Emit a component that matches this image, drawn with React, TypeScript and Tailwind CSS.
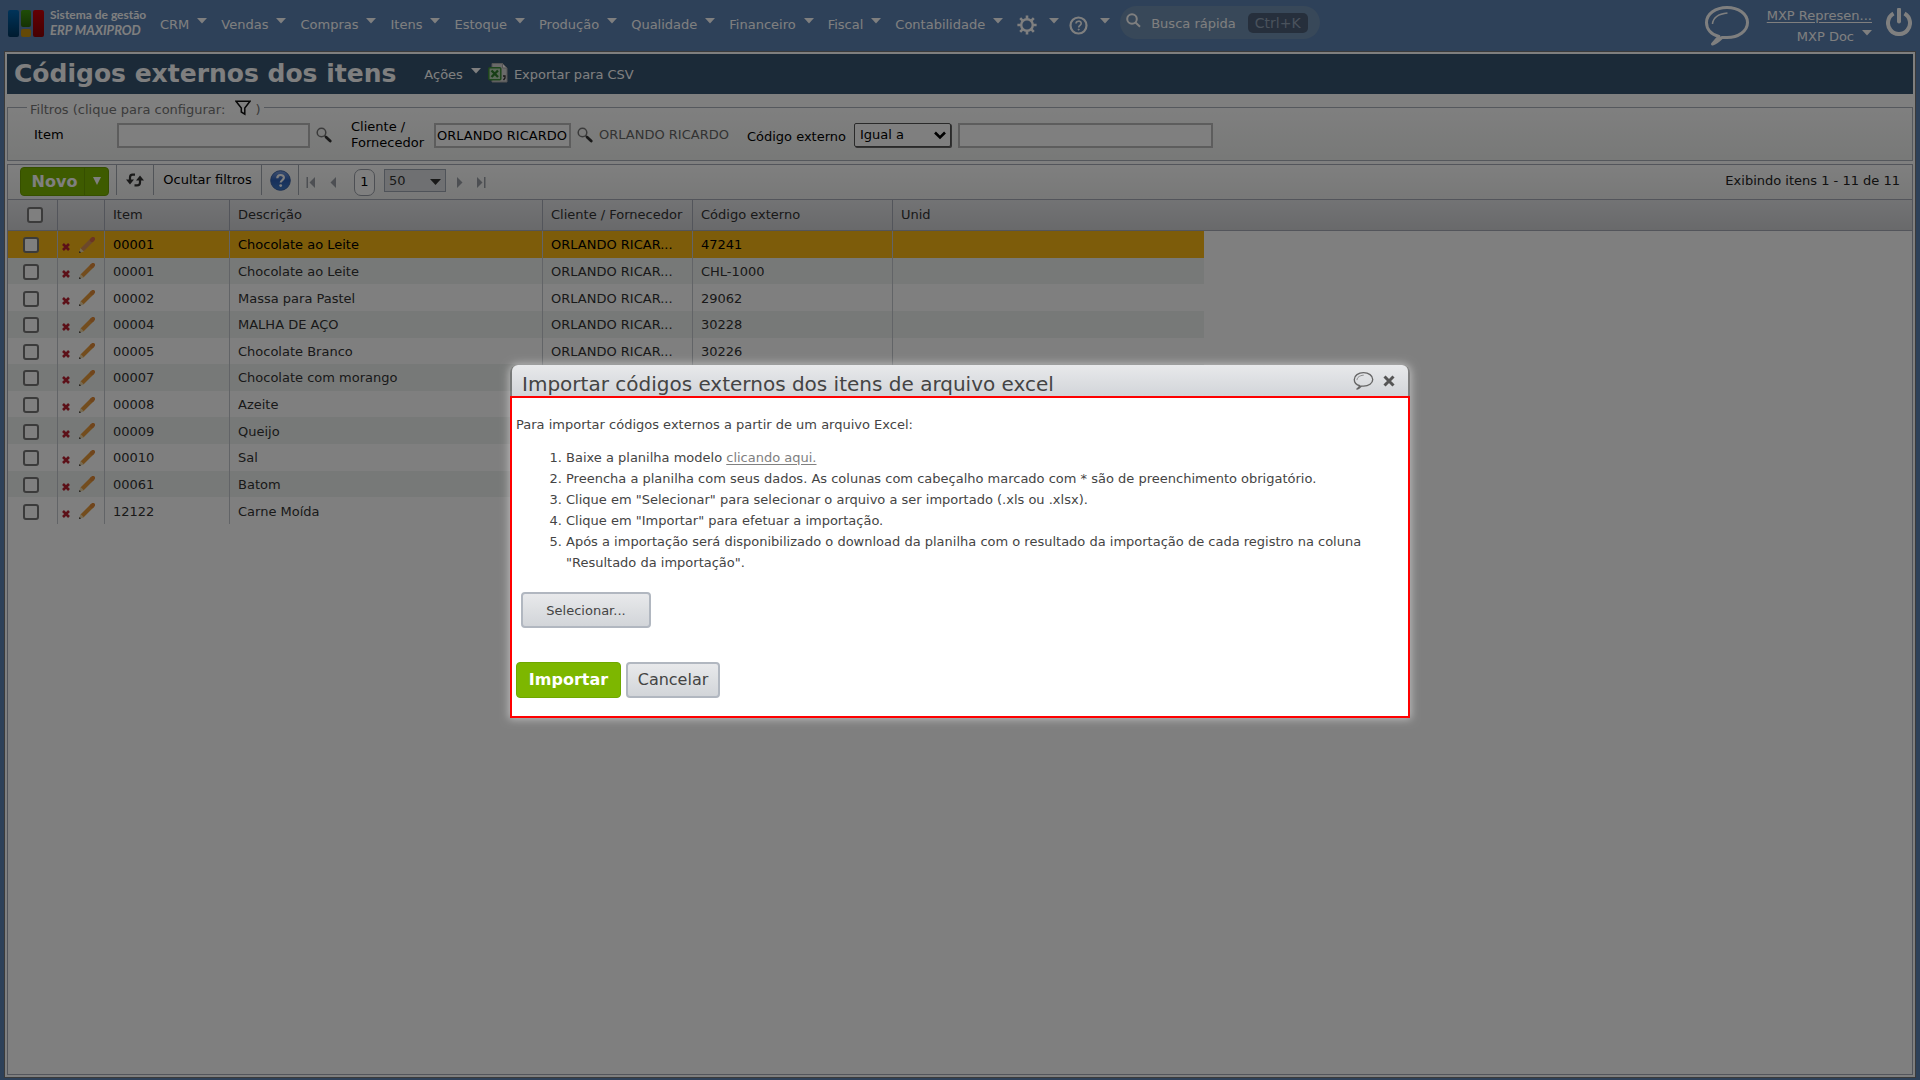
import { useState } from "react";

/* ─── Data ────────────────────────────────────────────────────────── */

const MENU = [
  "CRM",
  "Vendas",
  "Compras",
  "Itens",
  "Estoque",
  "Produção",
  "Qualidade",
  "Financeiro",
  "Fiscal",
  "Contabilidade",
];

const CUSTOMER = "ORLANDO RICARDO";
const CUSTOMER_SHORT = "ORLANDO RICAR...";

interface Row {
  item: string;
  desc: string;
  customer?: string;
  code?: string;
}

const ROWS: Row[] = [
  { item: "00001", desc: "Chocolate ao Leite", customer: CUSTOMER_SHORT, code: "47241" },
  { item: "00001", desc: "Chocolate ao Leite", customer: CUSTOMER_SHORT, code: "CHL-1000" },
  { item: "00002", desc: "Massa para Pastel", customer: CUSTOMER_SHORT, code: "29062" },
  { item: "00004", desc: "MALHA DE AÇO", customer: CUSTOMER_SHORT, code: "30228" },
  { item: "00005", desc: "Chocolate Branco", customer: CUSTOMER_SHORT, code: "30226" },
  { item: "00007", desc: "Chocolate com morango" },
  { item: "00008", desc: "Azeite" },
  { item: "00009", desc: "Queijo" },
  { item: "00010", desc: "Sal" },
  { item: "00061", desc: "Batom" },
  { item: "12122", desc: "Carne Moída" },
];

/* ─── Icons ───────────────────────────────────────────────────────── */

function Caret() {
  return (
    <svg width="10" height="6" viewBox="0 0 10 6" aria-hidden="true" className="mb-2 shrink-0">
      <path d="M0 0h10L5 5.5z" fill="#fff" />
    </svg>
  );
}

function Logo() {
  return (
    <svg width="36" height="28" viewBox="0 0 36 28" aria-hidden="true">
      <defs>
        <linearGradient id="blue" x1="0" y1="0" x2="0" y2="1">
          <stop offset="0" stopColor="#0068b4" />
          <stop offset="1" stopColor="#00365f" />
        </linearGradient>
        <linearGradient id="green" x1="0" y1="0" x2="0" y2="1">
          <stop offset="0" stopColor="#3f9a10" />
          <stop offset="1" stopColor="#2a640a" />
        </linearGradient>
        <linearGradient id="red" x1="0" y1="0" x2="0" y2="1">
          <stop offset="0" stopColor="#c80008" />
          <stop offset="1" stopColor="#8a0004" />
        </linearGradient>
      </defs>
      <rect width="11" height="27" rx="2" fill="url(#blue)" />
      <rect x="13" width="10" height="17" rx="2" fill="url(#green)" />
      <rect x="13" y="19" width="10" height="8" rx="2" fill="#c8920e" />
      <rect x="25" width="11" height="27" rx="2" fill="url(#red)" />
    </svg>
  );
}

function Gear() {
  return (
    <svg width="20" height="20" viewBox="0 0 20 20" fill="none" stroke="#fff" aria-hidden="true">
      <circle cx="10" cy="10" r="5.8" strokeWidth="2.4" />
      <path
        d="M10 .4v3.4M10 16.2v3.4M.4 10h3.4M16.2 10h3.4M3.2 3.2l2.4 2.4M14.4 14.4l2.4 2.4M3.2 16.8l2.4-2.4M14.4 5.6l2.4-2.4"
        strokeWidth="2.6"
      />
    </svg>
  );
}

function HelpRing() {
  return (
    <svg width="19" height="19" viewBox="0 0 19 19" fill="none" stroke="#fff" aria-hidden="true">
      <circle cx="9.5" cy="9.5" r="8" strokeWidth="2.2" />
      <path d="M7 7.6c0-3.2 5.2-3.2 5.2-.2 0 1.8-2.5 2-2.5 4" strokeWidth="1.6" />
      <circle cx="9.7" cy="13.6" r=".6" fill="#fff" strokeWidth=".8" />
    </svg>
  );
}

function SearchThin() {
  return (
    <svg width="15" height="15" viewBox="0 0 15 15" fill="none" stroke="#fff" strokeWidth="2" aria-hidden="true" className="mb-1">
      <circle cx="6" cy="6" r="4.8" />
      <path d="M9.5 9.5l4.5 4.2" />
    </svg>
  );
}

function Magnifier() {
  return (
    <svg width="16" height="16" viewBox="0 0 16 16" fill="none" aria-hidden="true">
      <circle cx="5.5" cy="5.5" r="4.3" stroke="#777" strokeWidth="1.5" />
      <path d="M8.8 8.8l1.8 1.6" stroke="#555" strokeWidth="1.6" />
      <path d="M10.2 10.2l4 3.8" stroke="#333" strokeWidth="2.8" strokeLinecap="round" />
    </svg>
  );
}

function Bubble({ className, color, width }: { className: string; color: string; width: number }) {
  return (
    <svg className={className} viewBox="0 0 44 40" fill="none" stroke={color} strokeWidth={width} aria-hidden="true">
      <path d="M14 30.5C6 28.5 1.5 23 1.5 16.5 1.5 8 10.5 1.5 22 1.5S42.5 8 42.5 16.5 33.5 31.5 22 31.5c-2 0-4-.2-5 0-3 3-6 5.5-9.5 6.500 2-2 4-4.500 6.500-7.500z" strokeLinejoin="round" />
      <path d="M7.500 18c.5-6 5-10 15-11" strokeWidth={width / 2} />
    </svg>
  );
}

function Power() {
  return (
    <svg width="26" height="28" viewBox="0 0 26 28" fill="none" stroke="#fff" strokeWidth="4" aria-hidden="true">
      <path d="M7.500 5.500a11 11 0 1 0 11 0" />
      <path d="M13 1.500v12" strokeLinecap="round" />
    </svg>
  );
}

function CsvFile() {
  return (
    <svg width="20" height="20" viewBox="0 0 20 20" aria-hidden="true" className="mb-1">
      <path d="M4 .5h10.500L19 5v14H4z" fill="#d4d4d4" stroke="#aaa" />
      <path d="M14.500.5V5H19z" fill="#fff" stroke="#aaa" />
      <rect x=".8" y="4.800" width="12" height="12" rx="1" fill="#b9d3b4" stroke="#3d8d38" strokeWidth="1.500" />
      <path d="M3.500 7.500l6.500 6.500M10 7.500L3.500 14" stroke="#2f7d2a" strokeWidth="2.400" />
      <path d="M15 13h2v2l-1.500 2" stroke="#333" strokeWidth="1.300" fill="none" />
    </svg>
  );
}

function Funnel() {
  return (
    <svg width="16" height="16" viewBox="0 0 16 16" fill="none" stroke="#111" strokeWidth="1.500" aria-hidden="true">
      <path d="M1 1.200h14L9.800 8v6.200L6.300 12V8z" />
    </svg>
  );
}

function Refresh() {
  return (
    <svg width="18" height="14" viewBox="0 0 18 14" aria-hidden="true">
      <g fill="none" stroke="#333" strokeWidth="2.200">
        <path d="M9 1.600H6.500Q4 1.600 4 4.500V8" />
        <path d="M8.500 12.400h2.500q3 0 3-3V6" />
      </g>
      <path d="M0 6.500h8L4 11.500zM10 7.500h8L14 2.500z" fill="#333" />
    </svg>
  );
}

function HelpBall() {
  return (
    <svg width="21" height="21" viewBox="0 0 21 21" aria-hidden="true">
      <defs>
        <linearGradient id="ball" x1="0" y1="0" x2="0" y2="1">
          <stop offset="0" stopColor="#7d9fe0" />
          <stop offset=".5" stopColor="#2f62b8" />
          <stop offset="1" stopColor="#3f7ac8" />
        </linearGradient>
      </defs>
      <circle cx="10.500" cy="10.500" r="9.800" fill="url(#ball)" stroke="#3a62a4" strokeWidth="1" />
      <path d="M7.300 8.200c0-4.200 6.600-4.200 6.600-.4 0 2.300-3.200 2.200-3.200 4.800" fill="none" stroke="#fff" strokeWidth="2.200" />
      <circle cx="10.700" cy="15.600" r="1.400" fill="#fff" />
    </svg>
  );
}

function PageArrow({ back, bar }: { back?: boolean; bar?: boolean }) {
  return (
    <svg width="9" height="11" viewBox="0 0 9 11" aria-hidden="true" className={back ? "rotate-180" : ""}>
      <path d={bar ? "M0 0v11l5.500-5.500z" : "M2 0v11l5.500-5.500z"} fill="#9a9fa6" />
      {bar && <path d="M7 0h1.500v11H7z" fill="#9a9fa6" />}
    </svg>
  );
}

function DeleteMark() {
  return (
    <svg width="8" height="8" viewBox="0 0 8 8" aria-hidden="true">
      <path d="M1 1l6 6M7 1L1 7" stroke="#b82030" strokeWidth="2.600" />
    </svg>
  );
}

function Pencil({ faded }: { faded: boolean }) {
  return (
    <svg width="17" height="17" viewBox="0 0 17 17" aria-hidden="true">
      <path d="M1 16l1.500-5 3.500 3.500z" fill="#ecd6a8" />
      <path d="M1 16l.6-2 1.400 1.400z" fill="#222" />
      <path d="M4.200 12.800L14.500 2.500" stroke={faded ? "#d89058" : "#e69a3c"} strokeWidth="4.200" />
      <path d="M14 3l1-1" stroke={faded ? "#d86a48" : "#e08a38"} strokeWidth="4.200" strokeLinecap="round" />
    </svg>
  );
}

/* ─── Page header ─────────────────────────────────────────────────── */

function TopBar() {
  return (
    <header className="flex h-[51px] items-start justify-between px-2 text-[13px] text-white">
      <div className="flex items-start">
        <a href="#" className="mt-[10px] flex w-[152px] gap-[6px] font-['Lato',sans-serif] font-bold">
          <Logo />
          <span className="-mt-1 flex flex-col whitespace-nowrap">
            <span className="text-[12px] leading-[18px]">Sistema de gestão</span>
            <span className="text-[13px] italic leading-3">ERP MAXIPROD</span>
          </span>
        </a>
        <nav className="flex h-[50px] items-center gap-[14px]">
          {MENU.map((name) => (
            <button key={name} type="button" className="flex items-center gap-2">
              {name}
              <Caret />
            </button>
          ))}
          <button type="button" aria-label="Configurações" className="flex items-center gap-3">
            <Gear />
            <Caret />
          </button>
          <button type="button" aria-label="Ajuda" className="-ml-1 flex items-center gap-3">
            <HelpRing />
            <Caret />
          </button>
        </nav>
        <button
          type="button"
          className="ml-[10px] mt-[6px] flex h-[33px] items-center rounded-full bg-[#7090b2] pl-[6px] pr-3"
        >
          <SearchThin />
          <span className="ml-[10px] mt-[2px]">Busca rápida</span>
          <kbd className="ml-3 rounded-[5px] bg-[#4c5f78] px-[7px] font-[inherit] text-sm leading-5 text-[#94a4b8]">
            Ctrl+K
          </kbd>
        </button>
      </div>

      <div className="flex items-start">
        <button type="button" aria-label="Chat" className="mt-[6px]">
          <Bubble className="h-10 w-11" color="#fff" width={3} />
        </button>
        <div className="ml-[18px] mt-[5px] flex flex-col items-end leading-[21px]">
          <a href="#" className="underline underline-offset-2">MXP Represen...</a>
          <button type="button" className="flex items-center gap-2">
            MXP Doc
            <Caret />
          </button>
        </div>
        <button type="button" aria-label="Sair" className="ml-[14px] mt-2">
          <Power />
        </button>
      </div>
    </header>
  );
}

function TitleBar() {
  return (
    <div className="flex h-10 items-center bg-[#365470] pl-[7px] text-[13px] text-white">
      <h1 className="text-[25px] font-bold">Códigos externos dos itens</h1>
      <button type="button" className="ml-7 mt-[2px] flex items-center gap-2">
        Ações
        <Caret />
      </button>
      <button type="button" className="ml-[7px] mt-[2px] flex items-center gap-[6px]">
        <CsvFile />
        Exportar para CSV
      </button>
    </div>
  );
}

/* ─── Filters ─────────────────────────────────────────────────────── */

function Filters() {
  return (
    <fieldset className="mt-[3px] h-[64px] border border-[#aab0ba] bg-linear-to-b from-white to-[#f0f2f0] text-[13px] text-black">
      <legend className="ml-[19px] flex h-5 items-center px-[3px] pt-[5px] text-[#777]">
        Filtros (clique para configurar:&nbsp;
        <button type="button" aria-label="Configurar filtros" className="mb-1 ml-[6px] mr-1">
          <Funnel />
        </button>
        )
      </legend>
      <div className="mt-[2px] flex items-center pl-[26px]">
        <label htmlFor="item" className="w-[83px]">Item</label>
        <input id="item" className="h-[25px] w-[193px] border-2 border-[#bbb] bg-white px-1" />
        <button type="button" aria-label="Buscar item" className="ml-[6px]">
          <Magnifier />
        </button>
        <label htmlFor="customer" className="ml-[19px] w-[83px] leading-4">
          Cliente / Fornecedor
        </label>
        <input
          id="customer"
          defaultValue={CUSTOMER}
          className="h-[25px] w-[137px] border-2 border-[#bbb] bg-white px-[1px]"
        />
        <button type="button" aria-label="Buscar cliente" className="ml-[6px]">
          <Magnifier />
        </button>
        <span className="ml-[6px] text-[#666]">{CUSTOMER}</span>
        <label htmlFor="code" className="ml-[18px] mt-1">Código externo</label>
        <div className="relative ml-2">
          <select
            aria-label="Operador"
            className="h-6 w-[97px] appearance-none rounded-[2px] border border-[#555] bg-white pl-[5px] shadow-[1px_1px_0_#666]"
          >
            <option>Igual a</option>
          </select>
          <svg className="pointer-events-none absolute right-[5px] top-2" width="12" height="9" viewBox="0 0 12 9">
            <path d="M1 1.500l5 5 5-5" fill="none" stroke="#000" strokeWidth="2.600" />
          </svg>
        </div>
        <input id="code" className="ml-[7px] h-[25px] w-[255px] border-2 border-[#bbb] bg-white px-1" />
      </div>
    </fieldset>
  );
}

/* ─── Grid ────────────────────────────────────────────────────────── */

function Toolbar() {
  return (
    <div className="flex h-[34px] items-start bg-linear-to-b from-white to-[#f0f1f0] pl-3 text-[13px] text-black">
      <div className="mt-[2px] flex h-[29px] rounded-[4px] border border-[#6d9f00] bg-[#7db700] text-white">
        <button type="button" className="w-[63px] pl-1 text-base font-bold">Novo</button>
        <button
          type="button"
          aria-label="Mais opções"
          className="flex w-6 items-center justify-center border-l border-[#6d9f00]"
        >
          <svg width="8" height="9" viewBox="0 0 8 9"><path d="M0 0h8L4 8z" fill="#fff" /></svg>
        </button>
      </div>
      <button
        type="button"
        aria-label="Atualizar"
        className="ml-[7px] flex h-[30px] w-[37px] items-center justify-center border-l border-[#a3a8b0]"
      >
        <Refresh />
      </button>
      <button type="button" className="h-[30px] w-[109px] border-x border-[#a3a8b0]">
        Ocultar filtros
      </button>
      <button
        type="button"
        aria-label="Ajuda"
        className="flex h-[30px] w-[37px] items-center justify-center border-r border-[#a3a8b0]"
      >
        <HelpBall />
      </button>
      <div className="flex h-[34px] items-center">
        <button type="button" aria-label="Primeira página" className="ml-[7px]"><PageArrow back bar /></button>
        <button type="button" aria-label="Página anterior" className="ml-[14px]"><PageArrow back /></button>
        <button type="button" className="ml-4 h-[27px] w-[21px] rounded-[7px] border border-[#9a9fa8] bg-white text-[13px]">
          1
        </button>
        <div className="relative mx-[9px] -mt-[3px]">
          <select
            aria-label="Itens por página"
            className="h-[23px] w-[62px] appearance-none border border-[#9fa6b2] bg-[#dfe1e4] pl-1 text-[#333]"
          >
            <option>50</option>
          </select>
          <svg className="pointer-events-none absolute right-[5px] top-[10px]" width="11" height="6" viewBox="0 0 11 6">
            <path d="M0 0h11L5.500 6z" fill="#333" />
          </svg>
        </div>
        <button type="button" aria-label="Próxima página"><PageArrow /></button>
        <button type="button" aria-label="Última página" className="ml-[13px]"><PageArrow bar /></button>
      </div>
      <span className="ml-auto mr-3 leading-8 text-[#222]">Exibindo itens 1 - 11 de 11</span>
    </div>
  );
}

function Grid() {
  const [selected, setSelected] = useState(0);

  const rowColor = (i: number) => {
    if (i === selected) return "*:bg-[#fab814] text-black";
    return i % 2 ? "*:bg-[#eff2f0] text-[#333]" : "text-[#333]";
  };

  return (
    <table className="h-[325px] w-full table-fixed border-separate border-spacing-0 text-left text-[13px] leading-5">
      <colgroup>
        <col className="w-[49px]" />
        <col className="w-[47px]" />
        <col className="w-[125px]" />
        <col className="w-[313px]" />
        <col className="w-[150px]" />
        <col className="w-[200px]" />
        <col className="w-[312px]" />
        <col />
      </colgroup>
      <thead>
        <tr className="h-8 text-[#333] *:border-b *:border-y-[#a6abb7] *:border-t *:bg-linear-to-b *:from-[#e6e7ea] *:to-[#d2d3d6] *:border-l-[#a6abb7] *:p-0 *:font-normal">
          <th className="align-middle">
            <input type="checkbox" aria-label="Selecionar todos" className="ml-[19px] block size-4 appearance-none rounded-[3px] border-2 border-[#767676] bg-white" />
          </th>
          <th className="border-l" />
          <th className="border-l"><span className="pl-2">Item</span></th>
          <th className="border-l"><span className="pl-2">Descrição</span></th>
          <th className="border-l"><span className="whitespace-nowrap pl-2">Cliente / Fornecedor</span></th>
          <th className="border-l"><span className="pl-2">Código externo</span></th>
          <th className="border-l"><span className="pl-2">Unid</span></th>
          <th />
        </tr>
      </thead>
      <tbody>
        {ROWS.map((row, i) => (
          <tr
            key={i}
            onClick={() => setSelected(i)}
            className={`*:border-[#c5c9cf] *:pb-0 *:pt-[2px] ${rowColor(i)}`}
          >
            <td className="p-0">
              <input type="checkbox" aria-label={`Selecionar ${row.desc}`} className="ml-[15px] block size-4 appearance-none rounded-[3px] border-2 border-[#767676] bg-white" />
            </td>
            <td className="border-l p-0">
              <div className="flex items-center gap-2 pl-1">
                <button type="button" aria-label="Excluir" className="mt-1"><DeleteMark /></button>
                <button type="button" aria-label="Editar"><Pencil faded={i === selected} /></button>
              </div>
            </td>
            <td className="border-l px-2">{row.item}</td>
            <td className="border-l px-2">{row.desc}</td>
            <td className="border-l px-2">{row.customer}</td>
            <td className="border-l px-2">{row.code}</td>
            <td className="border-l px-2" />
            <td className="bg-transparent!" />
          </tr>
        ))}
      </tbody>
    </table>
  );
}

/* ─── Import dialog ───────────────────────────────────────────────── */

const GREY_BUTTON =
  "rounded-[4px] border-2 border-[#b1b7c0] bg-linear-to-b from-[#e8e9eb] to-[#d2d5d9] text-[#444]";

function ImportDialog() {
  return (
    <div className="fixed inset-0 flex items-center justify-center bg-black/50 pt-[3px]">
      <section
        role="dialog"
        aria-labelledby="dialog-title"
        className="w-[900px] rounded-t-[8px] text-[#444] shadow-[0_0_8px_1px_rgba(255,255,255,0.5)]"
      >
        <div className="mx-[2px] flex h-[31px] items-center rounded-t-[6px] bg-linear-to-b from-[#e8e9eb] to-[#d2d5d9] pl-[10px] pr-[13px]">
          <h2 id="dialog-title" className="mt-[6px] text-xl">
            Importar códigos externos dos itens de arquivo excel
          </h2>
          <button type="button" aria-label="Comentar" className="ml-auto">
            <Bubble className="h-[18px] w-[21px]" color="#666" width={3} />
          </button>
          <button type="button" aria-label="Fechar" className="ml-[9px]">
            <svg width="12" height="12" viewBox="0 0 12 12">
              <path d="M1.500 1.500l9 9M10.500 1.500l-9 9" stroke="#555" strokeWidth="3" />
            </svg>
          </button>
        </div>

        <div className="border-2 border-[#f00] bg-white px-1 pb-[18px] pt-4 text-[13px] leading-[21px]">
          <p>Para importar códigos externos a partir de um arquivo Excel:</p>
          <ol className="mt-3 list-decimal pl-[50px] pr-4">
            <li>
              Baixe a planilha modelo{" "}
              <a href="#" className="text-[#808080] underline underline-offset-2">clicando aqui.</a>
            </li>
            <li>
              Preencha a planilha com seus dados. As colunas com cabeçalho marcado com * são de
              preenchimento obrigatório.
            </li>
            <li>Clique em "Selecionar" para selecionar o arquivo a ser importado (.xls ou .xlsx).</li>
            <li>Clique em "Importar" para efetuar a importação.</li>
            <li>
              Após a importação será disponibilizado o download da planilha com o resultado da
              importação de cada registro na coluna "Resultado da importação".
            </li>
          </ol>
          <button type="button" className={`${GREY_BUTTON} ml-[5px] mt-[19px] block h-9 w-[130px]`}>
            Selecionar...
          </button>
          <div className="mt-[34px] flex gap-[5px] text-base">
            <button type="submit" className="h-9 w-[105px] rounded-[4px] border border-[#6fa800] bg-[#7db700] font-bold text-white">
              Importar
            </button>
            <button type="button" className={`${GREY_BUTTON} h-9 w-[94px]`}>Cancelar</button>
          </div>
        </div>
      </section>
    </div>
  );
}

export default function App() {
  return (
    <div className="flex min-h-screen flex-col bg-[#5c82b2] pb-[2px] font-['Verdana','DejaVu_Sans',sans-serif]">
      <TopBar />
      <main className="mx-1 flex flex-1 flex-col border border-[#777] bg-white p-[2px]">
        <TitleBar />
        <Filters />
        <section className="mt-[3px] flex flex-1 flex-col border border-[#a6abb7]">
          <Toolbar />
          <Grid />
        </section>
      </main>
      <ImportDialog />
    </div>
  );
}
